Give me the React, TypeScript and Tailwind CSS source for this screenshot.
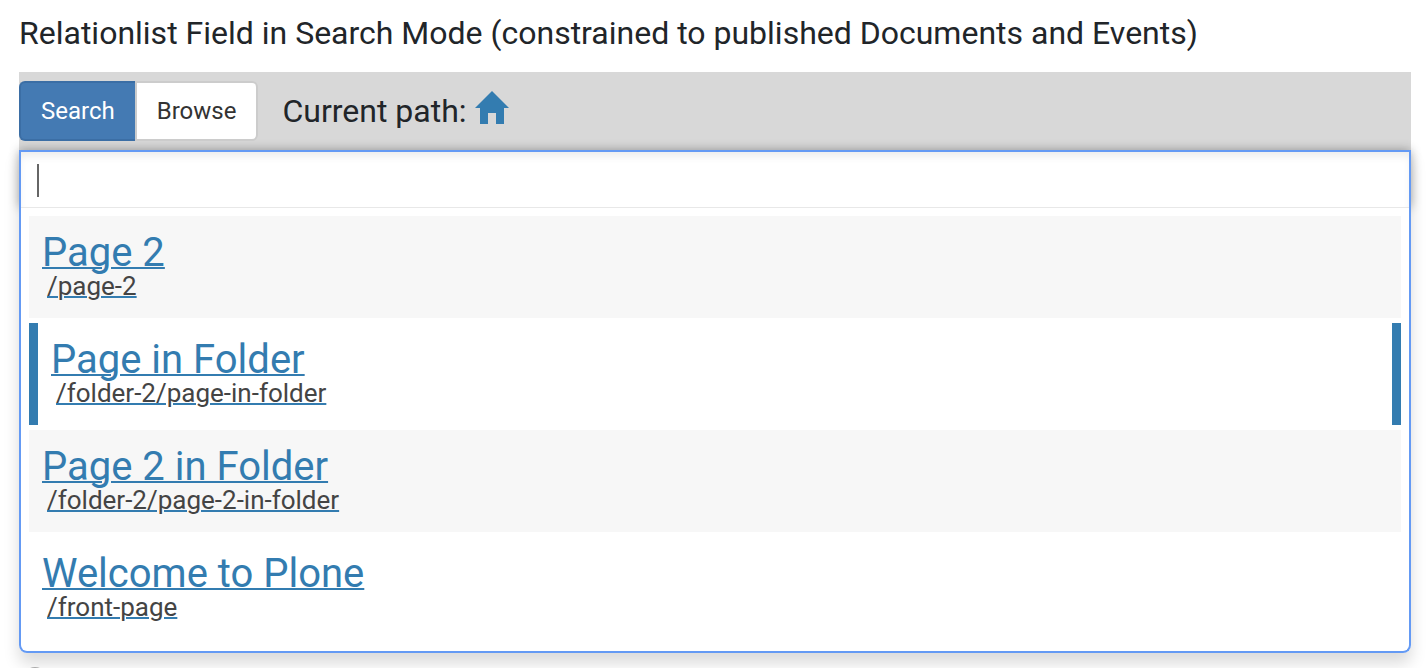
import { useState } from "react";

type Mode = "search" | "browse";

const results = [
  { title: "Page 2", path: "/page-2" },
  { title: "Page in Folder", path: "/folder-2/page-in-folder" },
  { title: "Page 2 in Folder", path: "/folder-2/page-2-in-folder" },
  { title: "Welcome to Plone", path: "/front-page" },
];

function HomeIcon() {
  return (
    <svg viewBox="0 0 34 33" className="h-[33px] w-[34px]" fill="currentColor" aria-hidden="true">
      <path d="M17 0 34 17H29V33H21V22H13V33H5V17H0Z" />
    </svg>
  );
}

function ModeSwitch({ mode, onChange }: { mode: Mode; onChange: (mode: Mode) => void }) {
  const active = "border-[#3b6ea5] bg-[#447ab3] text-white";
  const idle = "border-[#cccccc] bg-white text-[#333333]";
  return (
    <div className="flex h-15 text-2xl">
      <button
        type="button"
        onClick={() => onChange("search")}
        className={`rounded-l-md border-2 border-r-0 px-5 ${mode === "search" ? active : idle}`}
      >
        Search
      </button>
      <button
        type="button"
        onClick={() => onChange("browse")}
        className={`rounded-r-md border-2 px-5 ${mode === "browse" ? active : idle}`}
      >
        Browse
      </button>
    </div>
  );
}

export default function App() {
  const [mode, setMode] = useState<Mode>("search");
  const [query, setQuery] = useState("");
  const [highlighted, setHighlighted] = useState(1);

  return (
    <main className="bg-white pr-[17px] pl-[19px] font-[Roboto,sans-serif] text-[#212529]">
      <label htmlFor="relation-search" className="block pt-3 pb-[18px] text-[32px] leading-[42px]">
        Relationlist Field in Search Mode (constrained to published Documents and Events)
      </label>

      <div className="flex items-center bg-[#d8d8d8] py-[9px]">
        <ModeSwitch mode={mode} onChange={setMode} />
        <div className="ml-6 flex items-center gap-2 text-[32px] leading-10">
          <span>Current path:</span>
          <a href="#root" aria-label="Home" className="pb-2 text-[#337cb0]">
            <HomeIcon />
          </a>
        </div>
      </div>

      <div className="rounded-b-lg shadow-[0_10px_16px_rgba(0,0,0,0.15)]">
        <div className="flex h-[57px] items-center border-x-2 border-t-2 border-[#649af4] bg-white pt-px pl-4 shadow-[0_0_10px_rgba(0,0,0,0.3),inset_0_6px_8px_-2px_rgba(0,0,0,0.08)]">
          <span className="h-[33px] w-0.5 bg-[#666666]" aria-hidden="true" />
          <input
            id="relation-search"
            type="text"
            autoComplete="off"
            value={query}
            onChange={(event) => setQuery(event.target.value)}
            className="h-full min-w-0 flex-1 bg-transparent text-2xl caret-transparent outline-none"
          />
        </div>
        <ul className="relative flex flex-col gap-[5px] rounded-b-lg border-x-2 border-b-2 border-[#649af4] bg-white px-2 pt-[9px] pb-3">
          <li className="absolute inset-x-0 top-0 h-px bg-[#e8e8e8]" aria-hidden="true" />
          {results.map((result, index) => (
            <li
              key={result.path}
              onMouseEnter={() => setHighlighted(index)}
              className={`h-[102px] px-[13px] pt-[17px] ${
                index === highlighted ? "border-x-9 border-[#337cb0]" : ""
              } ${index % 2 === 0 ? "bg-[#f7f7f7]" : "bg-white"}`}
            >
              <a href={`#${result.path}`} className="block text-[#337cb0]">
                <span className="block text-[40px] leading-10 underline decoration-2">{result.title}</span>
                <span className="block pl-[5px] text-[26px] leading-[26px] text-[#444444]">
                  <span className="underline decoration-[#337cb0] decoration-2">{result.path}</span>
                </span>
              </a>
            </li>
          ))}
        </ul>
      </div>

      <div className="h-[15px] overflow-hidden pt-[14px] pl-1" aria-hidden="true">
        <div className="size-6 rounded-full border-2 border-[#aaaaaa]" />
      </div>
    </main>
  );
}
